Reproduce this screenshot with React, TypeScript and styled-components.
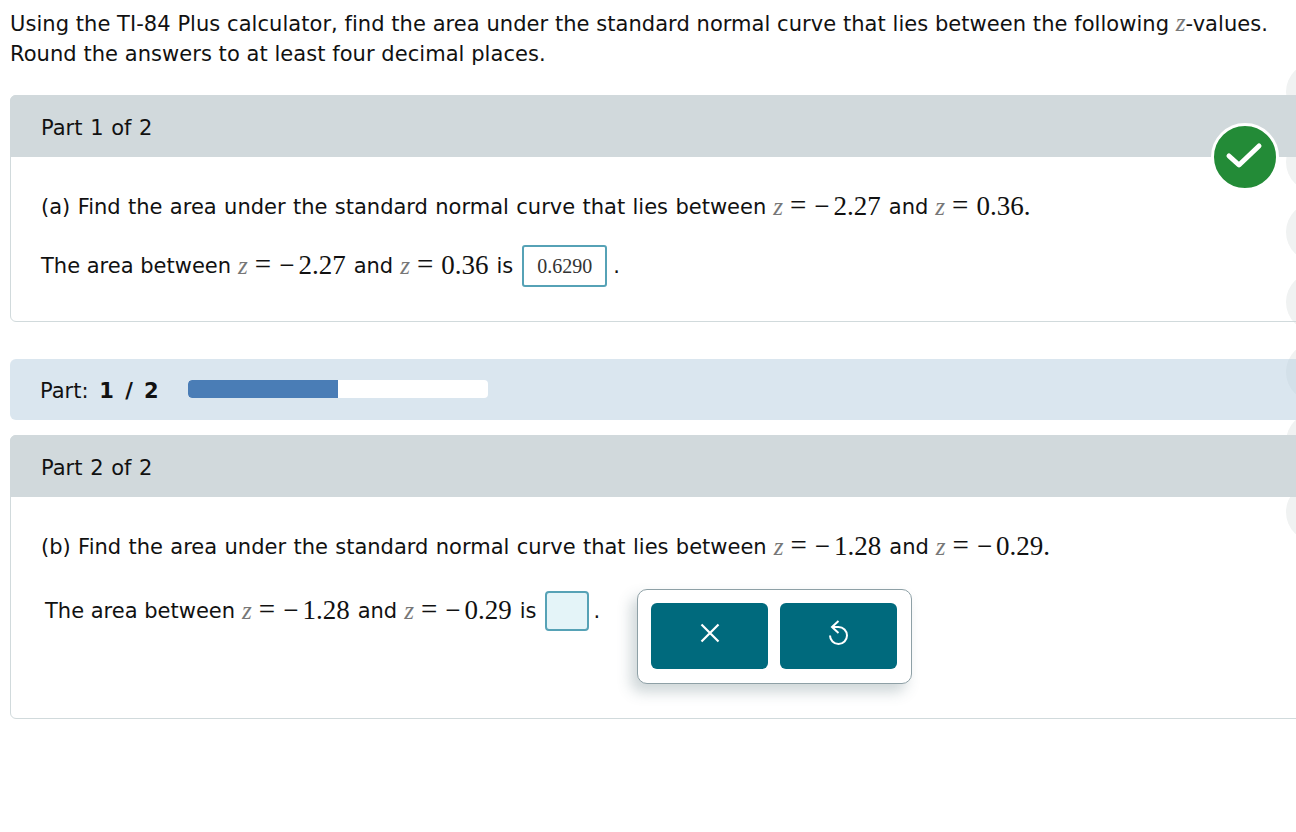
import React from "react";
import styled, { createGlobalStyle } from "styled-components";

const GlobalStyle = createGlobalStyle`
  html, body {
    margin: 0;
    padding: 0;
    background: #fff;
    overflow: hidden;
  }
  body {
    font-family: "DejaVu Sans", Verdana, sans-serif;
    color: #111;
  }
`;

const Page = styled.div`
  position: relative;
  width: 1296px;
  height: 832px;
  overflow: hidden;
  box-sizing: border-box;
  padding: 8px 0 0 10px;
`;

const Rail = styled.div`
  position: absolute;
  top: 62px;
  left: 1286px;
  display: flex;
  flex-direction: column;
  gap: 10px;
  z-index: 0;
`;

const RailDot = styled.span`
  display: block;
  width: 60px;
  height: 60px;
  border-radius: 50%;
  background: #f0f2f2;
`;

const Content = styled.div`
  position: relative;
  z-index: 1;
  width: 1320px;
`;

const Question = styled.p`
  margin: 0 0 26px;
  width: 1280px;
  font-size: 21px;
  line-height: 30px;
  letter-spacing: 0.05px;
  white-space: pre;
`;

const Card = styled.section<{ $height: number }>`
  position: relative;
  box-sizing: border-box;
  height: ${({ $height }) => $height}px;
  border: 1px solid #d1dadc;
  border-radius: 6px;
`;

const CardHeader = styled.div`
  box-sizing: border-box;
  height: 62px;
  margin: -1px -1px 0;
  display: flex;
  align-items: center;
  padding: 4px 0 0 31px;
  font-size: 21px;
  word-spacing: 1px;
  background: #d1d9dc;
  border-radius: 6px 6px 0 0;
`;

const CardBody = styled.div`
  padding: 30px 0 0 30px;
  font-size: 21px;
`;

const Line = styled.div<{ $indent?: number; $mt?: number; $wide?: boolean }>`
  display: flex;
  align-items: center;
  height: 40px;
  white-space: pre;
  word-spacing: ${({ $wide }) => ($wide ? "0.7px" : "0")};
  margin-left: ${({ $indent }) => $indent ?? 0}px;
  margin-top: ${({ $mt }) => $mt ?? 0}px;
`;

const MathText = styled.span`
  display: inline-flex;
  align-items: baseline;
  font-family: "Liberation Serif", "Times New Roman", serif;
  font-size: 27px;
  margin: 0 8px 4px 7px;
`;

const MathVar = styled.i`
  font-family: "Liberation Serif", "Times New Roman", serif;
  color: #777;
  font-size: 25px;
`;

const Equals = styled.span`
  font-size: 29px;
  margin: 0 8px 0 7px;
`;

const Minus = styled.span`
  margin-right: 4px;
`;

const AnswerBox = styled.span`
  box-sizing: border-box;
  width: 85px;
  height: 42px;
  margin-left: 9px;
  margin-right: 6px;
  display: inline-flex;
  align-items: center;
  justify-content: center;
  font-family: "Liberation Serif", "Times New Roman", serif;
  font-size: 20px;
  color: #333;
  background: #fff;
  border: 2px solid #56a2b6;
  border-radius: 3px;
`;

const EmptyInput = styled.span`
  box-sizing: border-box;
  width: 44px;
  height: 40px;
  margin-left: 8px;
  margin-right: 5px;
  display: inline-block;
  background: #e4f4f8;
  border: 2px solid #56a2b6;
  border-radius: 4px;
`;

const Progress = styled.div`
  height: 61px;
  margin: 37px 0 15px;
  display: flex;
  align-items: center;
  padding-left: 30px;
  font-size: 21px;
  border-radius: 6px;
  background: rgba(181, 205, 223, 0.5);

  b {
    font-weight: 700;
  }
`;

const ProgressLabel = styled.span`
  width: 148px;
  padding-top: 2px;
  white-space: pre;
  word-spacing: 4px;
`;

const Track = styled.div`
  width: 300px;
  height: 18px;
  margin-bottom: 2px;
  border-radius: 4px;
  background: #fff;
  overflow: hidden;
`;

const Fill = styled.div`
  height: 100%;
  background: #4a7db6;
  border-radius: 4px 0 0 4px;
`;

const CheckBadge = styled.span`
  position: absolute;
  left: 1200px;
  top: 27px;
  box-sizing: border-box;
  width: 68px;
  height: 68px;
  display: flex;
  align-items: center;
  justify-content: center;
  border-radius: 50%;
  background: #238b37;
  border: 3px solid #fff;
`;

const Popup = styled.div`
  position: absolute;
  left: 626px;
  top: 153px;
  box-sizing: border-box;
  width: 275px;
  height: 95px;
  display: flex;
  gap: 12px;
  padding: 13px;
  border: 1px solid #8ea0a6;
  border-radius: 10px;
  background: #fff;
  box-shadow: -6px 8px 14px rgba(60, 90, 100, 0.25);
`;

const ToolButton = styled.button`
  box-sizing: border-box;
  width: 117px;
  height: 66px;
  padding: 0 0 6px;
  display: flex;
  align-items: center;
  justify-content: center;
  border: 0;
  border-radius: 6px;
  background: #006a7d;
`;

const Expr: React.FC<{ value: string; negative?: boolean }> = ({ value, negative }) => (
  <MathText>
    <MathVar>z</MathVar>
    <Equals>=</Equals>
    {negative && <Minus>−</Minus>}
    {value}
  </MathText>
);

const App: React.FC = () => (
  <Page>
    <GlobalStyle />
    <Rail>
      {Array.from({ length: 7 }).map((_, i) => (
        <RailDot key={i} />
      ))}
    </Rail>
    <Content>
      <Question>
        Using the TI-84 Plus calculator, find the area under the standard normal curve that lies between the following <MathVar>z</MathVar>-values.
        <br />
        Round the answers to at least four decimal places.
      </Question>

      <Card $height={227}>
        <CardHeader>Part 1 of 2</CardHeader>
        <CardBody>
          <Line $wide>
            (a) Find the area under the standard normal curve that lies between
            <Expr value="2.27" negative />
            and
            <Expr value="0.36." />
          </Line>
          <Line $mt={19}>
            The area between
            <Expr value="2.27" negative />
            and
            <Expr value="0.36" />
            is
            <AnswerBox>0.6290</AnswerBox>.
          </Line>
        </CardBody>
        <CheckBadge>
          <svg width="40" height="40" viewBox="0 0 40 40" fill="none">
            <path
              d="M4 19 L14 28 L34 9"
              stroke="#fff"
              strokeWidth="5"
              strokeLinecap="round"
              strokeLinejoin="round"
            />
          </svg>
        </CheckBadge>
      </Card>

      <Progress>
        <ProgressLabel>
          Part: <b>1 / 2</b>
        </ProgressLabel>
        <Track>
          <Fill style={{ width: `${(1 / 2) * 100}%` }} />
        </Track>
      </Progress>

      <Card $height={284}>
        <CardHeader>Part 2 of 2</CardHeader>
        <CardBody>
          <Line $wide>
            (b) Find the area under the standard normal curve that lies between
            <Expr value="1.28" negative />
            and
            <Expr value="0.29." negative />
          </Line>
          <Line $indent={4} $mt={24}>
            The area between
            <Expr value="1.28" negative />
            and
            <Expr value="0.29" negative />
            is
            <EmptyInput />.
          </Line>
        </CardBody>
        <Popup>
          <ToolButton aria-label="Clear">
            <svg width="22" height="22" viewBox="0 0 22 22" fill="none" stroke="#fff" strokeWidth="2.2">
              <path d="M2.5 2.5 L19.5 19.5 M19.5 2.5 L2.5 19.5" />
            </svg>
          </ToolButton>
          <ToolButton aria-label="Undo">
            <svg width="24" height="28" viewBox="0 0 24 28" fill="none" stroke="#fff" strokeWidth="2">
              <path d="M5 8 H11.5 A8.5 8.5 0 1 1 3 16.5" />
              <path d="M11.5 2 L5 8 L11.5 14" />
            </svg>
          </ToolButton>
        </Popup>
      </Card>
    </Content>
  </Page>
);

export default App;
